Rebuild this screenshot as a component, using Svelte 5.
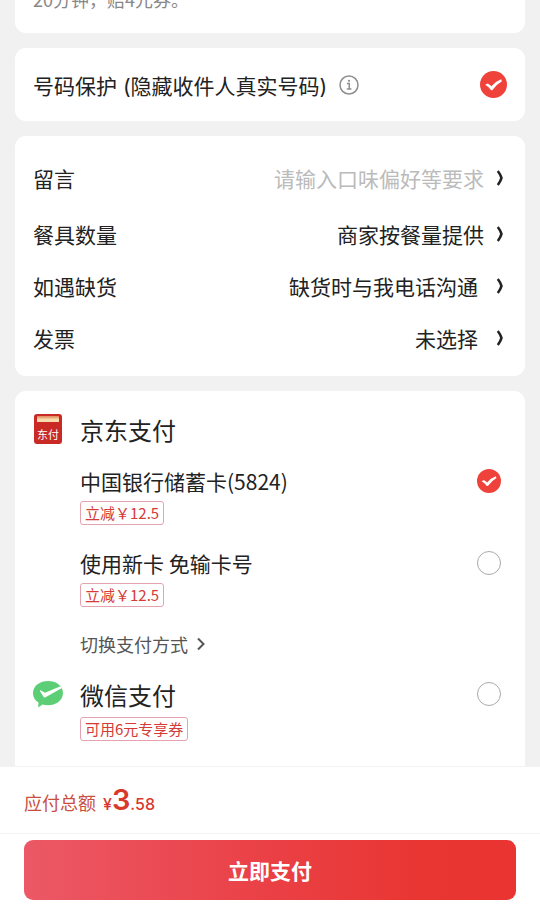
<script>
  let protect = $state(true);
  let pay = $state('card');
  let message = $state('');

  const settings = [
    { label: '餐具数量', value: '商家按餐量提供' },
    { label: '如遇缺货', value: '缺货时与我电话沟通', wide: true },
    { label: '发票', value: '未选择', wide: true }
  ];

  const cards = [
    { id: 'card', name: '中国银行储蓄卡(5824)', promo: '立减￥12.5' },
    { id: 'new', name: '使用新卡 免输卡号', promo: '立减￥12.5' }
  ];
</script>

{#snippet tick()}
  <svg class="tick" viewBox="0 0 24 24" aria-hidden="true">
    <path d="M4.6 12.3 6.8 11Q8.8 12 10.2 13.5 14 9 18.8 7.3L19.5 9.1Q14.5 12 10.9 17H9.9Q8 14.2 4.6 12.3Z" fill="#fff" />
  </svg>
{/snippet}

{#snippet chevron()}
  <svg class="chevron" width="8" height="16" viewBox="0 0 8 16" aria-hidden="true">
    <path d="M1.8 1Q4.3 4.2 5.5 8 4.3 11.8 1.8 15" fill="none" stroke="currentColor" stroke-width="2.5" />
  </svg>
{/snippet}

<div class="page">
  <main>
    <section class="card notice">
      <p>20分钟，赔4元券。</p>
    </section>

    <section class="card protect">
      <label for="protect">号码保护 (隐藏收件人真实号码)</label>
      <button class="info" aria-label="号码保护说明">
        <svg width="20" height="20" viewBox="0 0 20 20" fill="none" stroke="#8e8e8e">
          <circle cx="10" cy="10" r="9" stroke-width="1.5" />
          <path d="M8 8.6h2.3v5.2M7.8 14h4.6" stroke-width="1.5" />
          <circle cx="10" cy="5.8" r="1.1" fill="#8e8e8e" stroke="none" />
        </svg>
      </button>
      <span class="check large">
        <input id="protect" type="checkbox" bind:checked={protect} />
        {#if protect}{@render tick()}{/if}
      </span>
    </section>

    <section class="card settings">
      <div class="row first">
        <label for="message">留言</label>
        <input id="message" type="text" placeholder="请输入口味偏好等要求" bind:value={message} />
        {@render chevron()}
      </div>
      {#each settings as item}
        <button class="row" class:wide={item.wide}>
          <span>{item.label}</span>
          <span class="value">{item.value}</span>
          {@render chevron()}
        </button>
      {/each}
    </section>

    <section class="card payment">
      <div class="title">
        <svg class="logo" width="30" height="32" viewBox="0 0 30 32" aria-hidden="true">
          <rect x="1" y="1" width="28" height="30" rx="3" fill="#c92a26" />
          <path d="M4 4.5q0-1 1-1h20q1 0 1 1V9H4z" fill="#f9dcae" />
          <path d="M4 4.5q0-1 1-1h20q1 0 1 1v1H4z" fill="#e9a872" />
          <text x="15" y="25.5" text-anchor="middle" font-size="11" fill="#fff">东付</text>
        </svg>
        <h2>京东支付</h2>
      </div>
      {#each cards as card}
        <label class="option">
          <span class="name">{card.name}</span>
          <span class="check">
            <input type="radio" name="pay" value={card.id} bind:group={pay} />
            {#if pay === card.id}{@render tick()}{/if}
          </span>
          <span class="promo">{card.promo}</span>
        </label>
      {/each}
      <button class="switch">
        切换支付方式
        <svg width="10" height="14" viewBox="0 0 10 14" aria-hidden="true">
          <path d="M2 1.5 7.5 7 2 12.5" fill="none" stroke="currentColor" stroke-width="2" />
        </svg>
      </button>
      <label class="wechat">
        <span class="title">
          <svg class="logo" width="30" height="28" viewBox="0 0 30 28" aria-hidden="true">
            <path d="M15 1C23 1 30 5.7 30 13S23 25.3 15 25.3q-3-.1-5.5-.8L5.2 27.4 5.5 22.6Q0 19 0 13.2C0 5.8 7 1 15 1Z" fill="#5ccf76" />
            <path d="M7 11.2q-.3-1.3 1-.8l4 2.4L27.5 6.2 29 8 12.5 17.3q-1.4.6-2-.6Z" fill="#fff" />
          </svg>
          <span class="heading">微信支付</span>
          <span class="check">
            <input type="radio" name="pay" value="wechat" bind:group={pay} />
            {#if pay === 'wechat'}{@render tick()}{/if}
          </span>
        </span>
        <span class="promo">可用6元专享券</span>
      </label>
    </section>
  </main>

  <footer>
    <p class="total">应付总额 <span class="price">¥<b>3</b>.58</span></p>
    <div class="action">
      <button class="submit">立即支付</button>
    </div>
  </footer>
</div>

<style>
  :global(body) {
    margin: 0;
    background: #f1f1f1;
    color: #222;
    font-family: 'Noto Sans CJK SC', sans-serif;
    font-size: 21px;
  }
  .page {
    display: flex;
    flex-direction: column;
    height: 100vh;
  }
  .page * {
    box-sizing: border-box;
  }
  main {
    flex: 1;
    min-height: 0;
    display: flex;
    flex-direction: column;
    gap: 15px;
    padding: 0 15px;
    overflow: hidden auto;
    scrollbar-width: none;
  }
  button,
  input {
    margin: 0;
    padding: 0;
    border: 0;
    background: none;
    color: inherit;
    font: inherit;
  }
  button {
    cursor: pointer;
  }
  p,
  h2 {
    margin: 0;
    font-weight: 400;
  }
  .card {
    flex-shrink: 0;
    padding: 0 18px;
    background: #fff;
    border-radius: 11px;
  }
  .notice {
    margin-top: -14px;
    padding-bottom: 21px;
    color: #888;
    font-size: 18px;
    line-height: 26px;
  }
  .protect {
    display: flex;
    align-items: center;
    height: 73px;
  }
  .protect label {
    font-family: Inter, 'Noto Sans CJK SC', sans-serif;
  }
  .info {
    display: flex;
    margin-left: 12px;
  }

  .check {
    display: grid;
    width: 24px;
    height: 24px;
    margin-left: auto;
  }
  .check.large {
    width: 27px;
    height: 27px;
  }
  .check input,
  .check .tick {
    grid-area: 1 / 1;
    width: 100%;
    height: 100%;
  }
  .check .tick {
    pointer-events: none;
  }
  .check input {
    appearance: none;
    border: 1px solid #aaa;
    border-radius: 50%;
  }
  .check input:checked {
    border: 0;
    background: #ee423b;
  }

  .settings {
    padding: 12px 18px;
  }
  .row {
    display: flex;
    align-items: center;
    gap: 12px;
    width: 100%;
    height: 52px;
    padding-right: 3px;
    text-align: left;
  }
  .row.first {
    height: 60px;
  }
  .row.wide {
    gap: 18px;
  }
  .row input {
    flex: 1;
    min-width: 0;
    text-align: right;
    outline: none;
  }
  .row input::placeholder {
    color: #bbb;
    opacity: 1;
  }
  .row .value {
    margin-left: auto;
  }
  .chevron {
    flex-shrink: 0;
  }

  .payment {
    padding: 16px 24px 48px 18px;
  }
  .title {
    display: flex;
    align-items: center;
    height: 44px;
  }
  .logo {
    width: 30px;
    margin-right: 17px;
  }
  h2,
  .heading {
    font-size: 24px;
  }
  .option {
    display: grid;
    grid-template-columns: 1fr auto;
    align-items: center;
    padding: 13px 0 8px 47px;
  }
  .name {
    line-height: 34px;
  }
  .promo {
    justify-self: start;
    margin-top: 3px;
    padding: 0 4px;
    border: 1px solid #e5a3b0;
    border-radius: 3px;
    color: #d43a36;
    font-size: 15px;
    line-height: 22px;
  }
  .switch {
    display: flex;
    align-items: center;
    gap: 8px;
    height: 57px;
    margin-left: 47px;
    color: #555;
    font-size: 18px;
  }
  .wechat {
    display: flex;
    flex-direction: column;
    align-items: stretch;
  }
  .wechat .promo {
    align-self: flex-start;
    margin: 1px 0 0 47px;
  }

  footer {
    background: #fff;
    border-top: 1px solid #f3f3f3;
  }
  .total {
    display: flex;
    align-items: baseline;
    gap: 7px;
    height: 67px;
    padding: 11px 24px 0;
    border-bottom: 1px solid #f5f2f2;
    color: #c9503f;
    font-size: 18px;
    line-height: 44px;
  }
  .price {
    color: #d8392b;
    font-family: Inter, 'Noto Sans CJK SC', sans-serif;
    font-size: 16px;
    font-weight: 500;
  }
  .price b {
    font-size: 29px;
    font-weight: 600;
  }
  .action {
    padding: 6px 24px 18px;
  }
  .submit {
    width: 100%;
    height: 60px;
    border-radius: 9px;
    background: linear-gradient(90deg, #ec5866, #ea4045 50%, #e93633 80%, #e93431);
    color: #fff;
    font-weight: 700;
  }
</style>
